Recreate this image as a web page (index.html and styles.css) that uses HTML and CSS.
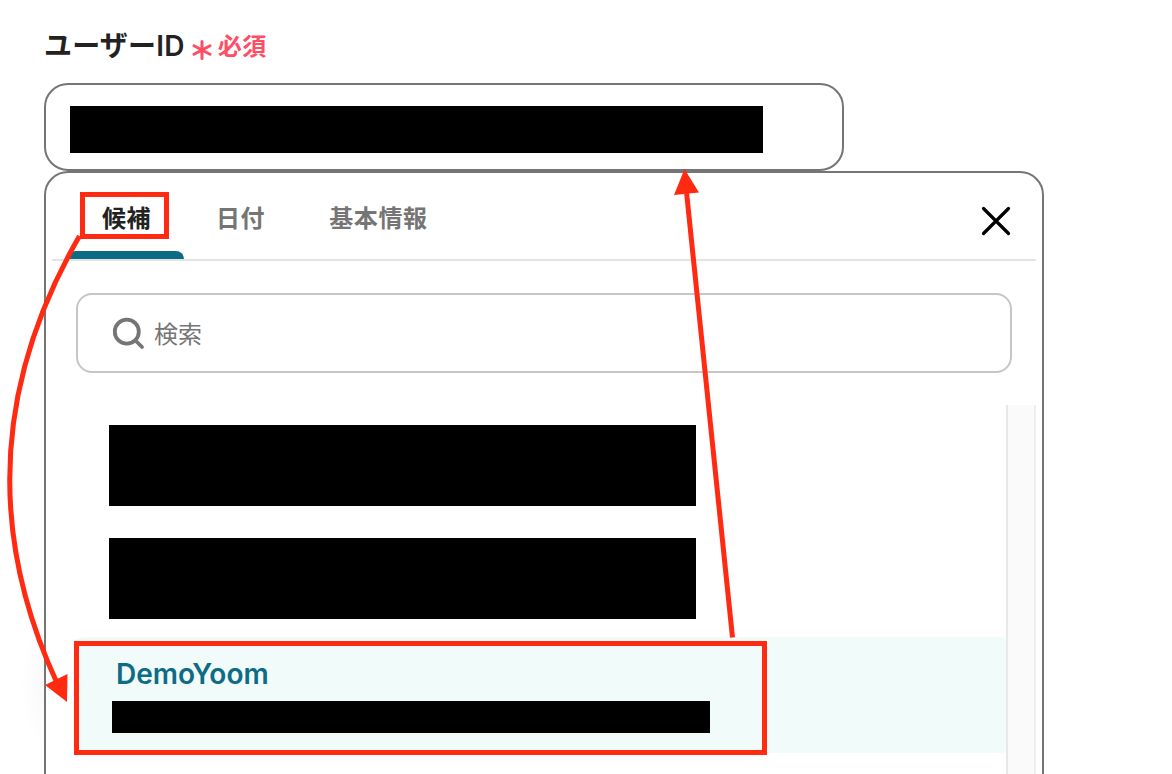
FILE: index.html
```html
<!DOCTYPE html>
<html lang="ja">
<head>
  <meta charset="UTF-8">
  <title>ユーザーID</title>
  <link rel="stylesheet" href="styles.css">
</head>
<body>
  <div class="field">
    <div class="field-label">
      <span class="field-name">ユーザーID</span>
      <svg class="required-icon" width="20" height="20" viewBox="0 0 20 20"><path d="M10 1.5v17M2 5.7l16 8.6M18 5.7L2 14.3"/></svg>
      <span class="required">必須</span>
    </div>
    <div class="field-input"><div class="mask mask-input"></div></div>

    <div class="panel">
      <div class="panel-head">
        <div class="tabs">
          <div class="tab active">候補</div>
          <div class="tab">日付</div>
          <div class="tab">基本情報</div>
        </div>
        <svg class="close" width="32" height="32" viewBox="0 0 32 32"><path d="M3.5 3.5l25 25M28.5 3.5l-25 25"/></svg>
      </div>

      <div class="search">
        <svg class="search-icon" width="34" height="34" viewBox="0 0 34 34"><circle cx="15.8" cy="15.7" r="12"/><path d="M24.5 24.5l6.500 6.500"/></svg>
        <span class="search-text">検索</span>
      </div>

      <div class="list">
        <div class="items">
          <div class="item"><div class="mask mask-item"></div></div>
          <div class="item"><div class="mask mask-item"></div></div>
          <div class="item selected">
            <div class="item-name">DemoYoom</div>
            <div class="mask mask-id"></div>
          </div>
        </div>
        <div class="scrollbar"></div>
      </div>
    </div>
  </div>

  <div class="shade"></div>
  <svg class="notes" width="1172" height="774" viewBox="0 0 1172 774">
    <rect x="82.5" y="194.5" width="84" height="42"/>
    <rect x="76.5" y="643.5" width="688" height="109"/>
    <path d="M79.5 236Q-48 457 57.5 684"/>
    <path d="M732.5 637.5L686.5 192"/>
    <polygon points="45,685 67.5,674 67,702"/>
    <polygon points="684.5,169 674,195 699,192.5"/>
  </svg>
</body>
</html>
```

FILE: styles.css
```css
* {
  box-sizing: border-box;
}

body {
  margin: 0;
  height: 774px;
  overflow: hidden;
  position: relative;
  background-color: #fff;
  color: #222;
  font-family: Inter, "Noto Sans CJK JP", sans-serif;
}

.field {
  padding: 27px 0 0 44px;
}

.field-label {
  display: flex;
  align-items: center;
  height: 40px;
  margin-bottom: 16px;
}

.field-name {
  margin-top: -2px;
  font-size: 28px;
  font-weight: 600;
  letter-spacing: 0.2px;
  line-height: 40px;
}

.required-icon {
  margin: 5px 6px 0 7px;
  fill: none;
  stroke: #ff4d64;
  stroke-width: 3;
  stroke-linecap: round;
}

.required {
  color: #ff4d64;
  font-size: 24px;
  font-weight: 600;
  letter-spacing: 0.6px;
  line-height: 40px;
}

.field-input {
  width: 800px;
  height: 88px;
  padding: 21px 24px;
  border: 2px solid #757575;
  border-radius: 24px;
}

.mask {
  background-color: #000;
}

.mask-input {
  width: 693px;
  height: 47px;
}

.panel {
  width: 1000px;
  height: 640px;
  padding: 0 6px;
  border: 2px solid #757575;
  border-radius: 24px;
}

.panel-head {
  display: flex;
  justify-content: space-between;
  height: 88px;
  padding: 0 24px 0 16px;
  border-bottom: 2px solid #e4e4e4;
}

.tabs {
  display: flex;
}

.tab {
  height: 86px;
  padding: 26px 32px 0;
  color: #757575;
  font-size: 24px;
  font-weight: 600;
  line-height: 40px;
  letter-spacing: 0.6px;
}

.tab.active {
  display: flex;
  flex-direction: column;
  justify-content: space-between;
  width: 116px;
  padding-left: 34px;
  color: #222;
}

.tab.active::after {
  content: "";
  height: 8px;
  margin: 0 -32px 0 -34px;
  background-color: #0e6b85;
  border-radius: 8px 8px 0 0;
}

.close {
  margin-top: 32px;
  fill: none;
  stroke: #000;
  stroke-width: 3.2;
  stroke-linecap: round;
}

.search {
  display: flex;
  align-items: center;
  height: 80px;
  margin: 32px 24px;
  padding-left: 33px;
  border: 2px solid #c6c6c6;
  border-radius: 16px;
  color: #757575;
  font-size: 24px;
}

.search-icon {
  margin-right: 9px;
  fill: none;
  stroke: #757575;
  stroke-width: 3.8;
  stroke-linecap: round;
}

.search-text {
  margin-top: -2px;
}

.list {
  display: flex;
  height: 400px;
}

.items {
  flex: 1;
  padding-left: 24px;
  overflow: hidden;
}

.item {
  width: 932px;
  height: 113px;
  padding: 20px 33px 0;
}

.item.selected {
  height: 116px;
  margin-top: 6px;
  padding: 16px 36px 0;
  background-color: #f1fbfa;
  border-radius: 8px;
}

.mask-item {
  width: 587px;
  height: 81px;
}

.mask-id {
  width: 598px;
  height: 32px;
  margin-top: 6px;
}

.item-name {
  padding-left: 4px;
  color: #0e6b85;
  font-size: 28px;
  font-weight: 600;
  line-height: 42px;
}

.scrollbar {
  width: 30px;
  background-color: #fafafa;
  border-left: 2px solid #e8e8e8;
  border-right: 2px solid #ededed;
}

.shade {
  position: absolute;
  left: 20px;
  top: 620px;
  width: 24px;
  height: 130px;
  background: radial-gradient(ellipse 24px 62px at right center, #f9f9f9, #fff);
}

.notes {
  position: absolute;
  left: 0;
  top: 0;
  fill: none;
  stroke: #ff2a12;
  stroke-width: 5;
}

.notes polygon {
  fill: #ff2a12;
  stroke: none;
}
```
